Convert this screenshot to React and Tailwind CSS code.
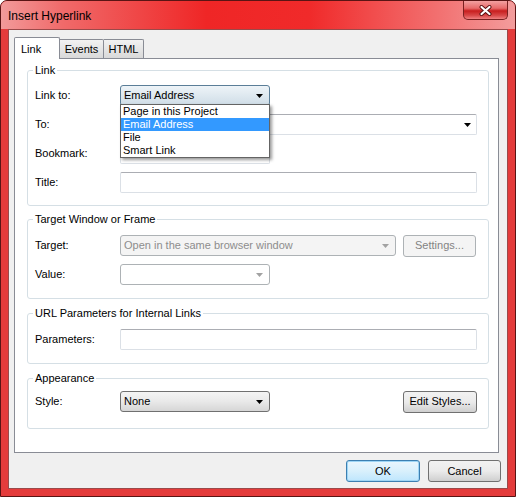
import React from 'react'

// Insert Hyperlink dialog, Win7 Aero look (red frame)

function Arrow({ disabled }) {
  return (
    <svg width="7" height="4" viewBox="0 0 7 4" className="shrink-0">
      <path d="M0 0h7L3.5 4z" fill={disabled ? '#a2a2a2' : '#000'} />
    </svg>
  )
}

function Row({ label, children }) {
  return (
    <div className="flex items-center h-[21px]">
      <span className="w-[92px] pl-[7px] shrink-0">{label}</span>
      {children}
    </div>
  )
}

function Group({ title, className, children }) {
  return (
    <div className={`relative w-[462px] border border-[#d5dfe5] rounded-[3px] ${className}`}>
      <span className="absolute -top-[8px] left-[5px] bg-white px-[2px] leading-[14px]">{title}</span>
      {children}
    </div>
  )
}

function Combo({ w, children, open }) {
  return (
    <div
      className={`${w} h-[21px] flex items-center justify-between pl-[3px] pr-[6px] rounded-[3px] border ${
        open
          ? 'border-[#5b7e98] bg-gradient-to-b from-[#eef4f8] to-[#cfdde7]'
          : 'border-[#707070] bg-gradient-to-b from-[#f4f4f4] via-[#e9e9e9] to-[#d6d6d6]'
      }`}
    >
      <span>{children}</span>
      <Arrow />
    </div>
  )
}

function TextBox({ w }) {
  return (
    <div className={`${w} h-[21px] rounded-[2px] border border-[#dbe0e6] border-t-[#abadb3] bg-white`} />
  )
}

function Btn({ children, w, primary, disabled }) {
  return (
    <div
      className={`${w} h-[22px] flex items-center justify-center rounded-[3px] border ${
        disabled
          ? 'border-[#adb2b5] bg-[#f4f4f4] text-[#838383]'
          : primary
          ? 'border-[#3c7fb1] bg-gradient-to-b from-[#eaf6fd] via-[#d9f0fc] to-[#bee6fd] shadow-[inset_0_0_0_1px_#9ed5f5]'
          : 'border-[#707070] bg-gradient-to-b from-[#f2f2f2] via-[#ebebeb] to-[#cfcfcf]'
      }`}
    >
      {children}
    </div>
  )
}

export default function App() {
  return (
    <div className="w-[516px] h-[497px] flex flex-col overflow-hidden rounded-t-[7px] border border-[#5a1414] bg-[#e43b3b] font-['Liberation_Sans',Arial,sans-serif] text-[11px] text-black">
      {/* title bar */}
      <div className="h-[28px] flex items-start bg-[linear-gradient(90deg,#f29a9a_0%,#f06a6a_12%,#ef2626_40%,#f02a2a_60%,#f27070_85%,#f39c9c_100%)]">
        <span className="mt-[8px] ml-[7px] text-[12px] leading-[15px]">Insert Hyperlink</span>
        <div className="ml-auto mr-[7px] w-[45px] h-[19px] flex items-center justify-center rounded-b-[5px] border border-t-0 border-[#7a2020] bg-[linear-gradient(180deg,#f3a0a0_0%,#e86a6a_40%,#c81e1e_55%,#d84848_80%,#f08080_100%)]">
          <svg width="13" height="11" viewBox="0 0 13 11">
            <path d="M2.5 2l8 7M10.5 2l-8 7" stroke="#5a1010" strokeWidth="4" strokeLinecap="round" />
            <path d="M2.5 2l8 7M10.5 2l-8 7" stroke="#fff" strokeWidth="2.2" strokeLinecap="round" />
          </svg>
        </div>
      </div>

      {/* client */}
      <div className="flex-1 px-[7px] pb-[7px] flex">
        <div className="flex-1 flex flex-col border border-[#9a4a4a] bg-[#f0f0f0]">
          {/* tabs */}
          <div className="flex items-end h-[21px] mt-[7px] ml-[5px]">
            <div className="relative z-10 w-[46px] h-[22px] -mb-[1px] bg-white border border-b-0 border-[#898c95] rounded-t-[2px] pl-[6px] pt-[3px]">
              Link
            </div>
            <div className="w-[44px] h-[19px] border border-b-0 border-l-0 border-[#898c95] rounded-tr-[2px] bg-gradient-to-b from-[#f2f2f2] to-[#d9d9d9] flex items-center justify-center">
              Events
            </div>
            <div className="w-[40px] h-[19px] border border-b-0 border-l-0 border-[#898c95] rounded-tr-[2px] bg-gradient-to-b from-[#f2f2f2] to-[#d9d9d9] flex items-center justify-center">
              HTML
            </div>
          </div>

          {/* panel */}
          <div className="ml-[5px] mr-[8px] h-[395px] bg-white border border-[#898c95] pt-[11px] pl-[12px]">
            <Group title="Link" className="pt-[14px] pb-[12px]">
              <div className="flex flex-col gap-[8px]">
                <div className="relative z-20">
                  <Row label="Link to:">
                    <div className="relative">
                      <Combo w="w-[150px]" open>Email Address</Combo>
                      <div className="absolute top-[19px] left-0 w-[150px] border border-[#646464] bg-white shadow-[2px_2px_3px_rgba(0,0,0,0.4)]">
                        <div className="h-[13px] leading-[13px] pl-[2px]">Page in this Project</div>
                        <div className="h-[13px] leading-[13px] pl-[2px] bg-[#3399ff] text-white">Email Address</div>
                        <div className="h-[13px] leading-[13px] pl-[2px]">File</div>
                        <div className="h-[13px] leading-[13px] pl-[2px]">Smart Link</div>
                      </div>
                    </div>
                  </Row>
                </div>
                <Row label="To:">
                  <div className="w-[357px] h-[21px] flex items-center justify-end pr-[5px] rounded-[2px] border border-[#dbe0e6] border-t-[#abadb3] bg-white">
                    <Arrow />
                  </div>
                </Row>
                <Row label="Bookmark:">
                  <TextBox w="w-[150px]" />
                </Row>
                <Row label="Title:">
                  <TextBox w="w-[357px]" />
                </Row>
              </div>
            </Group>

            <Group title="Target Window or Frame" className="mt-[13px] pt-[15px] pb-[13px]">
              <div className="flex flex-col gap-[8px]">
                <Row label="Target:">
                  <div className="w-[276px] h-[21px] flex items-center justify-between pl-[3px] pr-[6px] rounded-[3px] border border-[#adb2b5] bg-[#f4f4f4] text-[#8d8d8d]">
                    <span>Open in the same browser window</span>
                    <Arrow disabled />
                  </div>
                  <div className="ml-[7px]">
                    <Btn w="w-[73px]" disabled>Settings...</Btn>
                  </div>
                </Row>
                <Row label="Value:">
                  <div className="w-[150px] h-[21px] flex items-center justify-end pr-[6px] rounded-[3px] border border-[#adb2b5] bg-white">
                    <Arrow disabled />
                  </div>
                </Row>
              </div>
            </Group>

            <Group title="URL Parameters for Internal Links" className="mt-[14px] pt-[15px] pb-[13px]">
              <Row label="Parameters:">
                <TextBox w="w-[357px]" />
              </Row>
            </Group>

            <Group title="Appearance" className="mt-[14px] pt-[12px] pb-[16px]">
              <Row label="Style:">
                <Combo w="w-[150px]">None</Combo>
                <div className="ml-auto mr-[11px]">
                  <Btn w="w-[74px]">Edit Styles...</Btn>
                </div>
              </Row>
            </Group>
          </div>

          {/* buttons */}
          <div className="flex justify-end gap-[8px] mt-[7px] mr-[6px]">
            <Btn w="w-[74px]" primary>OK</Btn>
            <Btn w="w-[73px]">Cancel</Btn>
          </div>
        </div>
      </div>
    </div>
  )
}
